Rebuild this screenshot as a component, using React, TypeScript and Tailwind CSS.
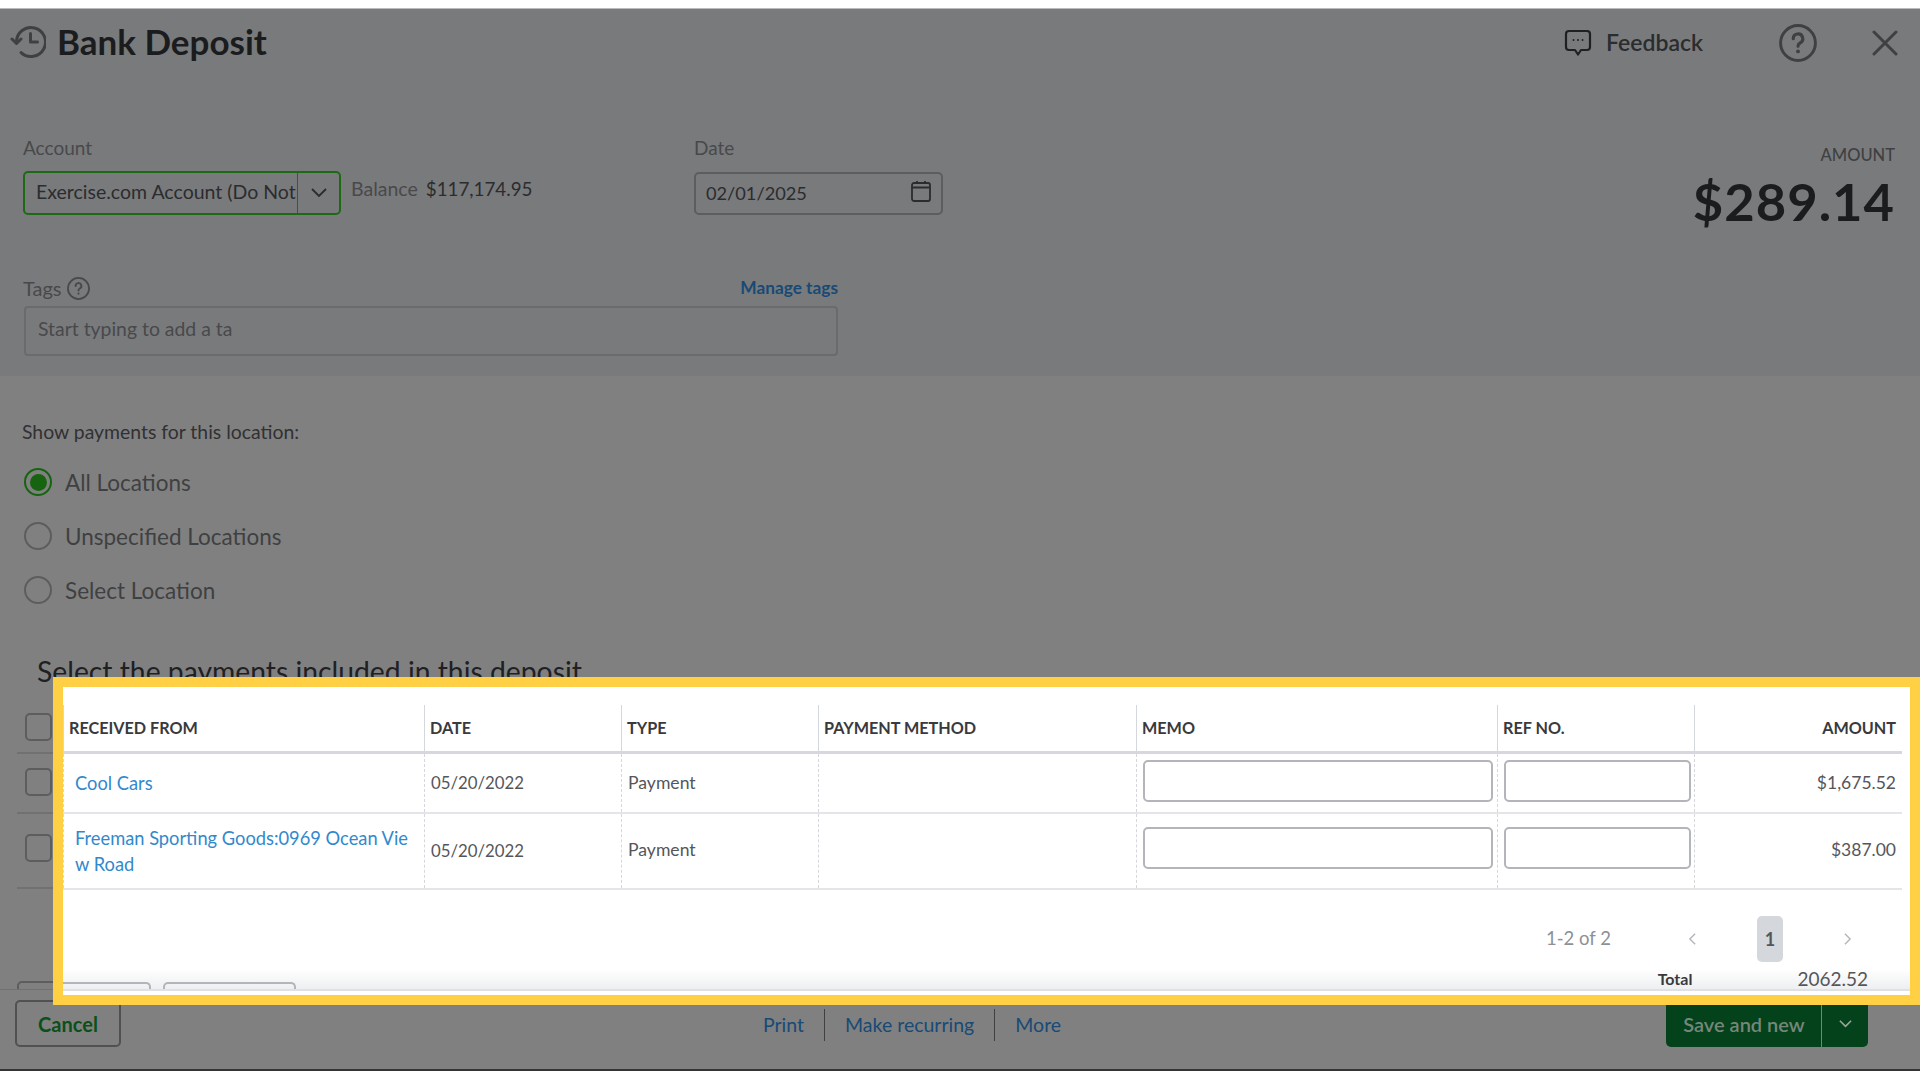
import React from 'react';

const HistoryIcon = () => (
  <svg viewBox="0 0 36 36" className="h-[36px] w-[36px]" fill="none" stroke="#3f4042" strokeWidth="3" strokeLinecap="round" strokeLinejoin="round">
    <path d="M6.5 18a14.5 14.5 0 1 1 4.6 10.6" />
    <path d="M2 15l4.5 4.5L11 15" />
    <path d="M20.5 9.5V18h7" />
  </svg>
);

const FeedbackIcon = () => (
  <svg viewBox="0 0 28 28" className="h-[28px] w-[28px]" fill="none" stroke="#1f2022" strokeWidth="2.200" strokeLinejoin="round">
    <path d="M5 2h18a3 3 0 0 1 3 3v13a3 3 0 0 1-3 3h-6l-3 4.500-3-4.500H5a3 3 0 0 1-3-3V5a3 3 0 0 1 3-3z" />
    <circle cx="9.500" cy="11" r="1" fill="#1f2022" stroke="none" />
    <circle cx="14" cy="11" r="1" fill="#1f2022" stroke="none" />
    <circle cx="18.500" cy="11" r="1" fill="#1f2022" stroke="none" />
  </svg>
);

const HelpIcon = ({ size, color }: { size: string; color: string }) => (
  <svg viewBox="0 0 36 36" className={size} fill="none" stroke={color} strokeWidth="2.800" strokeLinecap="round">
    <circle cx="18" cy="18" r="16.500" />
    <path d="M13.500 14a4.500 4.500 0 1 1 6.500 4c-1.300.7-2 1.500-2 3" strokeWidth="3" />
    <circle cx="18" cy="26" r="1.800" fill={color} stroke="none" />
  </svg>
);

const Radio = ({ label, checked }: { label: string; checked?: boolean }) => (
  <div className="flex h-[28px] items-center">
    <div className={`flex h-[28px] w-[28px] items-center justify-center rounded-full border-2 ${checked ? 'border-[#16640f]' : 'border-[#5c5d5f]'}`}>
      {checked && <div className="h-[17px] w-[17px] rounded-full bg-[#16640f]" />}
    </div>
    <span className="ml-[13px] pt-[1px] text-[22.500px] text-[#3f4042]">{label}</span>
  </div>
);

const Check = () => <div className="h-[28px] w-[27px] rounded-[5px] border-2 border-[#5c5d5f]" />;

const headers = ['RECEIVED FROM', 'DATE', 'TYPE', 'PAYMENT METHOD', 'MEMO', 'REF NO.', 'AMOUNT'];

const MemoInput = ({ w }: { w: string }) => (
  <div className={`${w} ml-[6px] h-[42px] rounded-[5px] border-2 border-[#b4b5bb] bg-white`} />
);

const Row = ({ name, amount, tall }: { name: React.ReactNode; amount: string; tall?: boolean }) => {
  const cell = `border-l border-dashed border-[#d4d7dc] flex items-center pl-[6px] ${tall ? 'h-[74px] pb-[1px]' : 'h-[58px]'}`;
  const amountText = 'text-[17.500px] text-[#55565a]';
  return (
    <div className="grid grid-cols-[361px_197px_197px_318px_361px_197px_208px] border-b-2 border-[#e3e5e8]">
      <div className={`${cell} pl-[11px] text-[18.300px] leading-[26px] text-[#3189cd]`}>{name}</div>
      <div className={`${cell} text-[16.800px] text-[#55565a]`}>05/20/2022</div>
      <div className={`${cell} text-[17.600px] text-[#55565a]`}>Payment</div>
      <div className={cell} />
      <div className={`border-l border-dashed border-[#d4d7dc] ${tall ? 'h-[74px] pt-[13px]' : 'h-[58px] pt-[6px]'}`}>
        <MemoInput w="w-[350px]" />
      </div>
      <div className={`border-l border-dashed border-[#d4d7dc] ${tall ? 'h-[74px] pt-[13px]' : 'h-[58px] pt-[6px]'}`}>
        <MemoInput w="w-[187px]" />
      </div>
      <div className={`${cell} justify-end pr-[6px] ${amountText}`}>{amount}</div>
    </div>
  );
};

const Highlight = () => (
  <div className="absolute left-[53px] top-[677px] h-[328px] w-[1867px] border-[10px] border-[#ffd044] bg-white pt-[18px]">
    <div className="w-[1839px]">
      <div className="grid grid-cols-[361px_197px_197px_318px_361px_197px_208px] border-b-[3px] border-[#d6d8dd]">
        {headers.map((h, i) => (
          <div key={h} className={`flex h-[46px] items-center border-l border-[#d4d7dc] pl-[5px] text-[16.200px] font-bold text-[#393a3d] ${i === 6 ? 'justify-end pr-[6px]' : ''}`}>
            {h}
          </div>
        ))}
      </div>
      <Row name="Cool Cars" amount="$1,675.52" />
      <Row tall name={<span className="block w-[345px] break-all">Freeman Sporting Goods:0969 Ocean View Road</span>} amount="$387.00" />
    </div>
    <div className="mt-[26px] flex h-[46px] items-center text-[#8d9096]">
      <span className="ml-[1483px] text-[18.500px]">1-2 of 2</span>
      <svg viewBox="0 0 10 16" className="ml-[77px] h-[14px] w-[9px]" fill="none" stroke="#b4b5bb" strokeWidth="1.600"><path d="M8 2 2 8l6 6" /></svg>
      <div className="ml-[60px] flex h-[46px] w-[26px] items-center justify-center rounded-[5px] bg-[#d4d7dc] text-[18px] font-bold text-[#55565a]">1</div>
      <svg viewBox="0 0 10 16" className="ml-[60px] h-[14px] w-[9px]" fill="none" stroke="#b4b5bb" strokeWidth="1.600"><path d="m2 2 6 6-6 6" /></svg>
    </div>
    <div className="mt-[7px] flex h-[20px] items-end bg-gradient-to-b from-white to-[#eeeff1] pr-[42px]">
      <div className="h-[7px] w-[88px] rounded-tr-[5px] border-r-2 border-t-2 border-[#b4b5bb]" />
      <div className="ml-[12px] h-[7px] w-[133px] rounded-t-[5px] border-x-2 border-t-2 border-[#b4b5bb]" />
      <span className="ml-auto self-center text-[16px] font-bold text-[#393a3d]">Total</span>
      <span className="ml-[105px] self-center text-[19px] text-[#55565a]">2062.52</span>
    </div>
    <div className="h-[2px] bg-[#dfe1e4]" />
  </div>
);

export default function App() {
  return (
    <div className="relative h-[1080px] w-[1920px] overflow-hidden bg-white font-['Lato','Liberation_Sans',sans-serif]">
      <div className="h-[9px] border-b border-[#bbb] bg-white" />
      <div className="h-[367px] bg-[#797a7c] px-[23px]">
        <div className="relative flex h-[67px] items-center">
          <div className="-ml-[13px] -mt-[2px]"><HistoryIcon /></div>
          <h1 className="-mt-[2px] ml-[11px] text-[35px] font-bold text-[#1b1c1e]">Bank Deposit</h1>
          <div className="ml-auto flex items-center">
            <FeedbackIcon />
            <span className="ml-[14px] text-[23px] font-semibold text-[#2b2c2e]">Feedback</span>
            <div className="ml-[76px]"><HelpIcon size="h-[38px] w-[38px]" color="#3f4042" /></div>
            <svg viewBox="0 0 26 26" className="ml-[55px] mr-[-1px] h-[26px] w-[26px]" fill="none" stroke="#3f4042" strokeWidth="3" strokeLinecap="round"><path d="M2 2l22 22M24 2 2 24" /></svg>
          </div>
        </div>
        <div className="flex pt-[60px]">
          <div className="w-[318px]">
            <div className="h-[24px] text-[19px] leading-[24px] text-[#48494b]">Account</div>
            <div className="mt-[11px] flex h-[44px] rounded-[5px] border-2 border-[#1d6a14]">
              <div className="w-[272px] overflow-hidden whitespace-nowrap pl-[11px] text-[19.500px] leading-[38px] text-[#2b2c2e]">Exercise.com Account (Do Not</div>
              <div className="flex flex-1 items-center justify-center border-l border-[#4a4b4d]">
                <svg viewBox="0 0 16 10" className="h-[10px] w-[16px]" fill="none" stroke="#2b2c2e" strokeWidth="1.800"><path d="m1 1 7 7 7-7" /></svg>
              </div>
            </div>
          </div>
          <div className="ml-[10px] mt-[38px] h-[26px] w-[343px] text-[19.500px] text-[#48494b]">
            Balance <span className="ml-[3px] text-[18.800px] text-[#2b2c2e]">$117,174.95</span>
          </div>
          <div className="w-[249px]">
            <div className="h-[24px] text-[19px] leading-[24px] text-[#48494b]">Date</div>
            <div className="mt-[12px] flex h-[43px] items-center justify-between rounded-[5px] border-2 border-[#5c5d5f] pl-[10px] pr-[10px] text-[18.200px] text-[#2b2c2e]">
              02/01/2025
              <svg viewBox="0 0 20 22" className="-mt-[6px] h-[22px] w-[20px]" fill="none" stroke="#2b2c2e" strokeWidth="1.800"><rect x="1" y="3" width="18" height="18" rx="2" /><path d="M1 7.500h18M6 1v3M14 1v3" /></svg>
            </div>
          </div>
          <div className="ml-auto pr-[2px] text-right">
            <div className="mt-[6px] text-[16.500px] font-medium leading-[26px] text-[#3f4042]">AMOUNT</div>
            <div className="mt-[3px] text-[52.500px] font-bold leading-[60px] tracking-[1px] text-[#1b1c1e]">$289.14</div>
          </div>
        </div>
        <div className="mt-[45px] w-[815px] pl-[1px]">
          <div className="flex h-[24px] items-center">
            <span className="text-[20px] -ml-[1px] text-[#48494b]">Tags</span>
            <div className="ml-[5px]"><HelpIcon size="h-[23px] w-[23px]" color="#48494b" /></div>
            <span className="ml-auto text-[17.300px] font-bold text-[#184a75]">Manage tags</span>
          </div>
          <div className="mt-[6px] flex h-[50px] items-center rounded-[4px] border-2 border-[#6a6b6d] pb-[4px] pl-[12px] text-[19.400px] text-[#48494b]">Start typing to add a ta</div>
        </div>
      </div>

      <div className="h-[613px] overflow-hidden bg-[#808080] pl-[22px]">
        <div className="pt-[44px] text-[19.400px] leading-[24px] text-[#303133]">Show payments for this location:</div>
        <div className="ml-[2px] mt-[24px] flex flex-col gap-[26px]">
          <Radio checked label="All Locations" />
          <Radio label="Unspecified Locations" />
          <Radio label="Select Location" />
        </div>
        <div className="ml-[15px] mt-[51px] text-[28.300px] leading-[32px] text-[#1f2022]">Select the payments included in this deposit</div>
        <div className="-ml-[5px] mt-[12px] w-[300px]">
          <div className="flex h-[55px] items-center border-b-2 border-[#707173] pl-[8px] pt-[2px]"><Check /></div>
          <div className="flex h-[60px] items-center border-b-2 border-[#707173] pb-[2px] pl-[8px]"><Check /></div>
          <div className="flex h-[75px] items-center border-b-2 border-[#707173] pb-[5px] pl-[8px]"><Check /></div>
        </div>
        <div className="-ml-[5px] mt-[92px] flex gap-[12px]">
          <div className="h-[20px] w-[134px] rounded-[5px] border-2 border-[#5c5d5f]" />
          <div className="h-[20px] w-[133px] rounded-[5px] border-2 border-[#5c5d5f]" />
        </div>
      </div>

      <div className="flex h-[82px] items-start border-b-2 border-t border-b-[#333436] border-t-[#707173] bg-[#808080] pl-[15px] pr-[52px] pt-[10px]">
        <div className="flex h-[47px] w-[106px] items-center justify-center rounded-[5px] border-2 border-[#505153] text-[20px] font-bold text-[#0b5019]">Cancel</div>
        <div className="ml-[642px] mt-[9px] flex h-[32px] items-center text-[19.500px] text-[#184a75]">
          <span>Print</span>
          <div className="ml-[20px] h-[32px] w-px bg-[#3f4042]" />
          <span className="ml-[20px]">Make recurring</span>
          <div className="ml-[20px] h-[32px] w-px bg-[#3f4042]" />
          <span className="ml-[20px]">More</span>
        </div>
        <div className="ml-auto flex h-[47px] w-[202px] rounded-[5px] bg-[#03421a] pl-[1px] text-[20px] font-semibold text-[#76877a]">
          <div className="flex w-[155px] items-center justify-center border-r border-[#6f8a74]">Save and new</div>
          <div className="flex flex-1 items-center justify-center">
            <svg viewBox="0 0 16 10" className="h-[8px] w-[13px]" fill="none" stroke="#9aa89c" strokeWidth="2"><path d="m1 1 7 7 7-7" /></svg>
          </div>
        </div>
      </div>

      <Highlight />
    </div>
  );
}
